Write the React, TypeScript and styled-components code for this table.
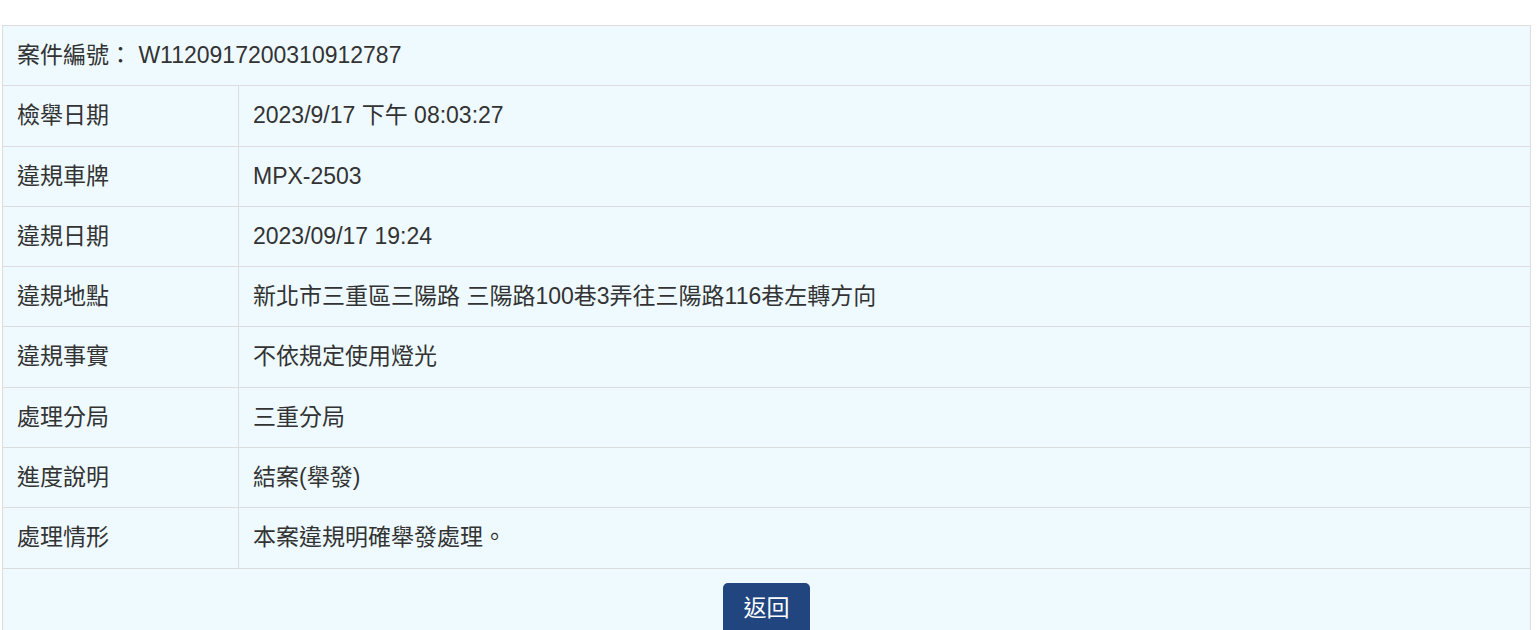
import React from "react";
import styled, { createGlobalStyle } from "styled-components";

const GlobalStyle = createGlobalStyle`
  html, body { margin: 0; padding: 0; background: #ffffff; }
  body { font-family: "Liberation Sans", "Noto Sans CJK TC", sans-serif; color: #333333; }
`;

const Page = styled.div`
  padding: 25px 6px 0 2px;
`;

const Table = styled.table`
  width: 100%;
  border-collapse: collapse;
  background: #eefaff;
  font-size: 23px;
  line-height: 33.3px;
  color: #333333;
`;

const Cell = styled.td<{ $label?: boolean }>`
  border: 1px solid #dddddd;
  padding: 13px 14px;
  width: ${(p) => (p.$label ? "207px" : "auto")};
  vertical-align: middle;
  text-align: left;
  white-space: nowrap;
`;

const ActionCell = styled.td`
  border: 1px solid #dddddd;
  padding: 14px 0 20px;
  text-align: center;
`;

const BackButton = styled.button`
  display: inline-flex;
  align-items: center;
  justify-content: center;
  width: 87px;
  height: 52px;
  border: none;
  border-radius: 5px;
  background: #21457f;
  color: #ffffff;
  font-family: "Liberation Sans", "Noto Sans CJK TC", sans-serif;
  font-size: 23px;
  cursor: pointer;
  padding: 0 0 5px;
`;

const rows: [string, string][] = [
  ["檢舉日期", "2023/9/17 下午 08:03:27"],
  ["違規車牌", "MPX-2503"],
  ["違規日期", "2023/09/17 19:24"],
  ["違規地點", "新北市三重區三陽路 三陽路100巷3弄往三陽路116巷左轉方向"],
  ["違規事實", "不依規定使用燈光"],
  ["處理分局", "三重分局"],
  ["進度說明", "結案(舉發)"],
  ["處理情形", "本案違規明確舉發處理。"],
];

export default function App() {
  return (
    <>
      <GlobalStyle />
      <Page>
        <Table>
          <tbody>
            <tr>
              <Cell colSpan={2}>案件編號： W1120917200310912787</Cell>
            </tr>
            {rows.map(([k, v]) => (
              <tr key={k}>
                <Cell $label>{k}</Cell>
                <Cell>{v}</Cell>
              </tr>
            ))}
            <tr>
              <ActionCell colSpan={2}>
                <BackButton type="button">返回</BackButton>
              </ActionCell>
            </tr>
          </tbody>
        </Table>
      </Page>
    </>
  );
}
